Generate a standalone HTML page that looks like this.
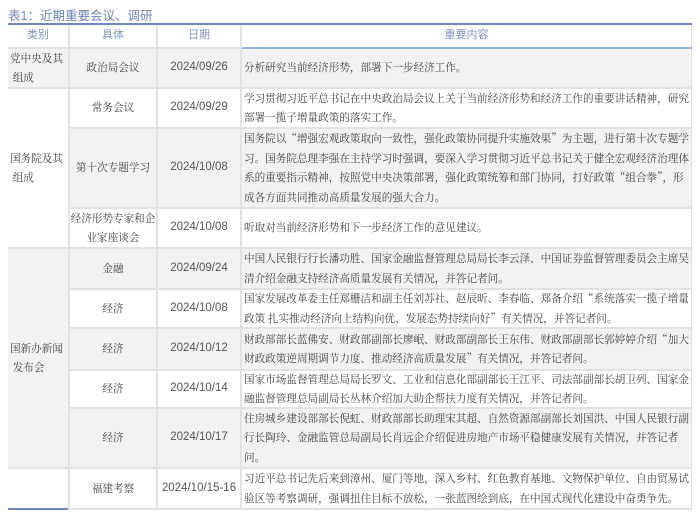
<!DOCTYPE html>
<html><head><meta charset="utf-8"><style>
body{margin:0;width:700px;height:519px;background:#fff;position:relative;overflow:hidden;font-family:"Noto Serif CJK SC","Liberation Serif",serif;color:#444;}
.c{position:absolute;display:flex;align-items:center;font-size:10.6px;line-height:19.5px;white-space:nowrap;box-sizing:border-box;}
.ctr{justify-content:center;text-align:center;}
.g{background:#f2f2f2}.w{background:#fff}
.n{font-family:"Liberation Sans","Noto Sans CJK SC",sans-serif;font-size:11.5px;color:#555}
.h{color:#7b95c9;font-family:"Liberation Sans","Noto Sans CJK SC",sans-serif;font-size:11px;}
.t{position:absolute;left:8px;top:5px;font-size:12.5px;color:#6b86b8;font-family:"Liberation Sans","Noto Sans CJK SC",sans-serif;}
.l{padding-left:2px}
</style></head><body>
<div class="t">表1：近期重要会议、调研</div>
<div style="position:absolute;left:8px;top:23px;width:684px;height:487px;background:#e2e2e2"></div>
<div style="position:absolute;left:8px;top:23px;width:684px;height:2px;background:#6c87c4"></div>
<div class="c ctr w h" style="left:8px;top:25px;width:60px;height:22px">类别</div>
<div class="c ctr w h" style="left:70px;top:25px;width:86px;height:22px">具体</div>
<div class="c ctr w h" style="left:158px;top:25px;width:82px;height:22px">日期</div>
<div class="c ctr w h" style="left:242px;top:25px;width:449px;height:22px">重要内容</div>
<div style="position:absolute;left:242px;top:47px;width:450px;height:2px;background:#8fb4e6"></div>

<div class="c g l" style="left:8px;top:49px;width:60px;height:38px;align-items:center"><div>党中央及其<br>&nbsp;组成</div></div>
<div class="c w l" style="left:8px;top:89px;width:60px;height:158px"><div>国务院及其<br>&nbsp;组成</div></div>
<div class="c g l" style="left:8px;top:249px;width:60px;height:218px"><div>国新办新闻<br>&nbsp;发布会</div></div>
<div class="c w" style="left:8px;top:469px;width:60px;height:39px"></div>
<div style="position:absolute;left:8px;top:508px;width:60px;height:2px;background:#6c87c4"></div>

<div class="c g ctr" style="left:70px;top:49px;width:86px;height:38px">政治局会议</div>
<div class="c g ctr n" style="left:158px;top:49px;width:82px;height:38px">2024/09/26</div>
<div class="c g l" style="left:242px;top:49px;width:449px;height:38px">分析研究当前经济形势，部署下一步经济工作。</div>

<div class="c w ctr" style="left:70px;top:89px;width:86px;height:38px">常务会议</div>
<div class="c w ctr n" style="left:158px;top:89px;width:82px;height:38px">2024/09/29</div>
<div class="c w l" style="left:242px;top:89px;width:449px;height:38px">学习贯彻习近平总书记在中央政治局会议上关于当前经济形势和经济工作的重要讲话精神，研究<br>部署一揽子增量政策的落实工作。</div>

<div class="c g ctr" style="left:70px;top:129px;width:86px;height:78px">第十次专题学习</div>
<div class="c g ctr n" style="left:158px;top:129px;width:82px;height:78px">2024/10/08</div>
<div class="c g l" style="left:242px;top:129px;width:449px;height:78px">国务院以“增强宏观政策取向一致性，强化政策协同提升实施效果”为主题，进行第十次专题学<br>习。国务院总理李强在主持学习时强调，要深入学习贯彻习近平总书记关于健全宏观经济治理体<br>系的重要指示精神，按照党中央决策部署，强化政策统筹和部门协同，打好政策“组合拳”，形<br>成各方面共同推动高质量发展的强大合力。</div>

<div class="c w ctr" style="left:70px;top:209px;width:86px;height:38px">经济形势专家和企<br>业家座谈会</div>
<div class="c w ctr n" style="left:158px;top:209px;width:82px;height:38px">2024/10/08</div>
<div class="c w l" style="left:242px;top:209px;width:449px;height:38px">听取对当前经济形势和下一步经济工作的意见建议。</div>

<div class="c g ctr" style="left:70px;top:249px;width:86px;height:39px">金融</div>
<div class="c g ctr n" style="left:158px;top:249px;width:82px;height:39px">2024/09/24</div>
<div class="c g l" style="left:242px;top:249px;width:449px;height:39px">中国人民银行行长潘功胜、国家金融监督管理总局局长李云泽、中国证券监督管理委员会主席吴<br>清介绍金融支持经济高质量发展有关情况，并答记者问。</div>

<div class="c w ctr" style="left:70px;top:290px;width:86px;height:37px">经济</div>
<div class="c w ctr n" style="left:158px;top:290px;width:82px;height:37px">2024/10/08</div>
<div class="c w l" style="left:242px;top:290px;width:449px;height:37px">国家发展改革委主任郑栅洁和副主任刘苏社、赵辰昕、李春临、郑备介绍“系统落实一揽子增量<br>政策 扎实推动经济向上结构向优、发展态势持续向好”有关情况，并答记者问。</div>

<div class="c g ctr" style="left:70px;top:329px;width:86px;height:40px">经济</div>
<div class="c g ctr n" style="left:158px;top:329px;width:82px;height:40px">2024/10/12</div>
<div class="c g l" style="left:242px;top:329px;width:449px;height:40px">财政部部长蓝佛安、财政部副部长廖岷、财政部副部长王东伟、财政部副部长郭婷婷介绍“加大<br>财政政策逆周期调节力度、推动经济高质量发展”有关情况，并答记者问。</div>

<div class="c w ctr" style="left:70px;top:371px;width:86px;height:36px">经济</div>
<div class="c w ctr n" style="left:158px;top:371px;width:82px;height:36px">2024/10/14</div>
<div class="c w l" style="left:242px;top:371px;width:449px;height:36px">国家市场监督管理总局局长罗文、工业和信息化部副部长王江平、司法部副部长胡卫列、国家金<br>融监督管理总局副局长丛林介绍加大助企帮扶力度有关情况，并答记者问。</div>

<div class="c g ctr" style="left:70px;top:409px;width:86px;height:58px">经济</div>
<div class="c g ctr n" style="left:158px;top:409px;width:82px;height:58px">2024/10/17</div>
<div class="c g l" style="left:242px;top:409px;width:449px;height:58px">住房城乡建设部部长倪虹、财政部部长助理宋其超、自然资源部副部长刘国洪、中国人民银行副<br>行长陶玲、金融监管总局副局长肖远企介绍促进房地产市场平稳健康发展有关情况，并答记者<br>问。</div>

<div class="c w ctr" style="left:70px;top:469px;width:86px;height:39px">福建考察</div>
<div class="c w ctr n" style="left:158px;top:469px;width:82px;height:39px">2024/10/15-16</div>
<div class="c w l" style="left:242px;top:469px;width:449px;height:39px">习近平总书记先后来到漳州、厦门等地，深入乡村、红色教育基地、文物保护单位、自由贸易试<br>验区等考察调研，强调扭住目标不放松，一张蓝图绘到底，在中国式现代化建设中奋勇争先。</div>
</body></html>
